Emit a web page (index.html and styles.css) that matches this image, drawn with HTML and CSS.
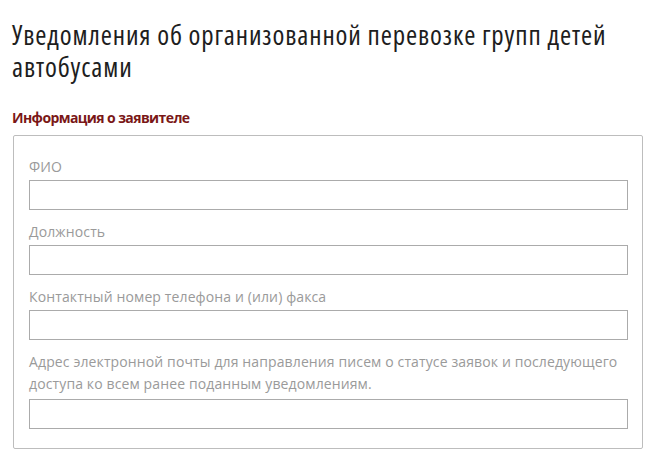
FILE: index.html
```html
<!DOCTYPE html>
<html lang="ru">
<head>
<meta charset="utf-8">
<link rel="stylesheet" href="styles.css">
</head>
<body>
<main class="page">
  <h1 class="title">Уведомления об организованной перевозке групп детей автобусами</h1>
  <h2 class="section-title">Информация о заявителе</h2>
  <fieldset class="panel">
    <div class="field">
      <label class="label">ФИО</label>
      <input class="input" type="text">
    </div>
    <div class="field">
      <label class="label">Должность</label>
      <input class="input" type="text">
    </div>
    <div class="field">
      <label class="label">Контактный номер телефона и (или) факса</label>
      <input class="input" type="text">
    </div>
    <div class="field">
      <label class="label label-multi">Адрес электронной почты для направления писем о статусе заявок и последующего доступа ко всем ранее поданным уведомлениям.</label>
      <input class="input" type="text">
    </div>
  </fieldset>
</main>
</body>
</html>
```

FILE: styles.css
```css
html, body {
  margin: 0;
  padding: 0;
  background: #ffffff;
}

.page {
  width: 630px;
  margin-left: 13px;
  font-family: "Open Sans", "Liberation Sans", sans-serif;
}

.title {
  margin: 19px 0 0 -1px;
  font-family: "Open Sans", "Roboto", sans-serif;
  font-stretch: condensed;
  font-size: 27px;
  line-height: 32px;
  font-weight: 400;
  letter-spacing: 0.85px;
  color: #1e1e1e;
}

.section-title {
  margin: 25px 0 0 -1px;
  font-size: 14px;
  line-height: 20px;
  font-weight: 700;
  letter-spacing: -0.6px;
  color: #7a1717;
}

.panel {
  margin: 7px 0 0 0;
  padding: 20px 14px 19px 15px;
  border: 1px solid #bdbdbd;
  border-radius: 2px;
  display: flex;
  flex-direction: column;
  gap: 11px;
  min-width: 0;
}

.field {
  display: flex;
  flex-direction: column;
  gap: 2px;
}

.label {
  font-size: 14px;
  line-height: 22px;
  color: #9a9a9a;
  letter-spacing: 0.12px;
}

.label-multi {
  margin-bottom: 2px;
}

.input {
  box-sizing: border-box;
  height: 30px;
  width: 100%;
  margin: 0;
  border: 1px solid #ababab;
  border-radius: 0;
  background: #fff;
  padding: 4px 8px;
  font-family: inherit;
  font-size: 14px;
}
```
